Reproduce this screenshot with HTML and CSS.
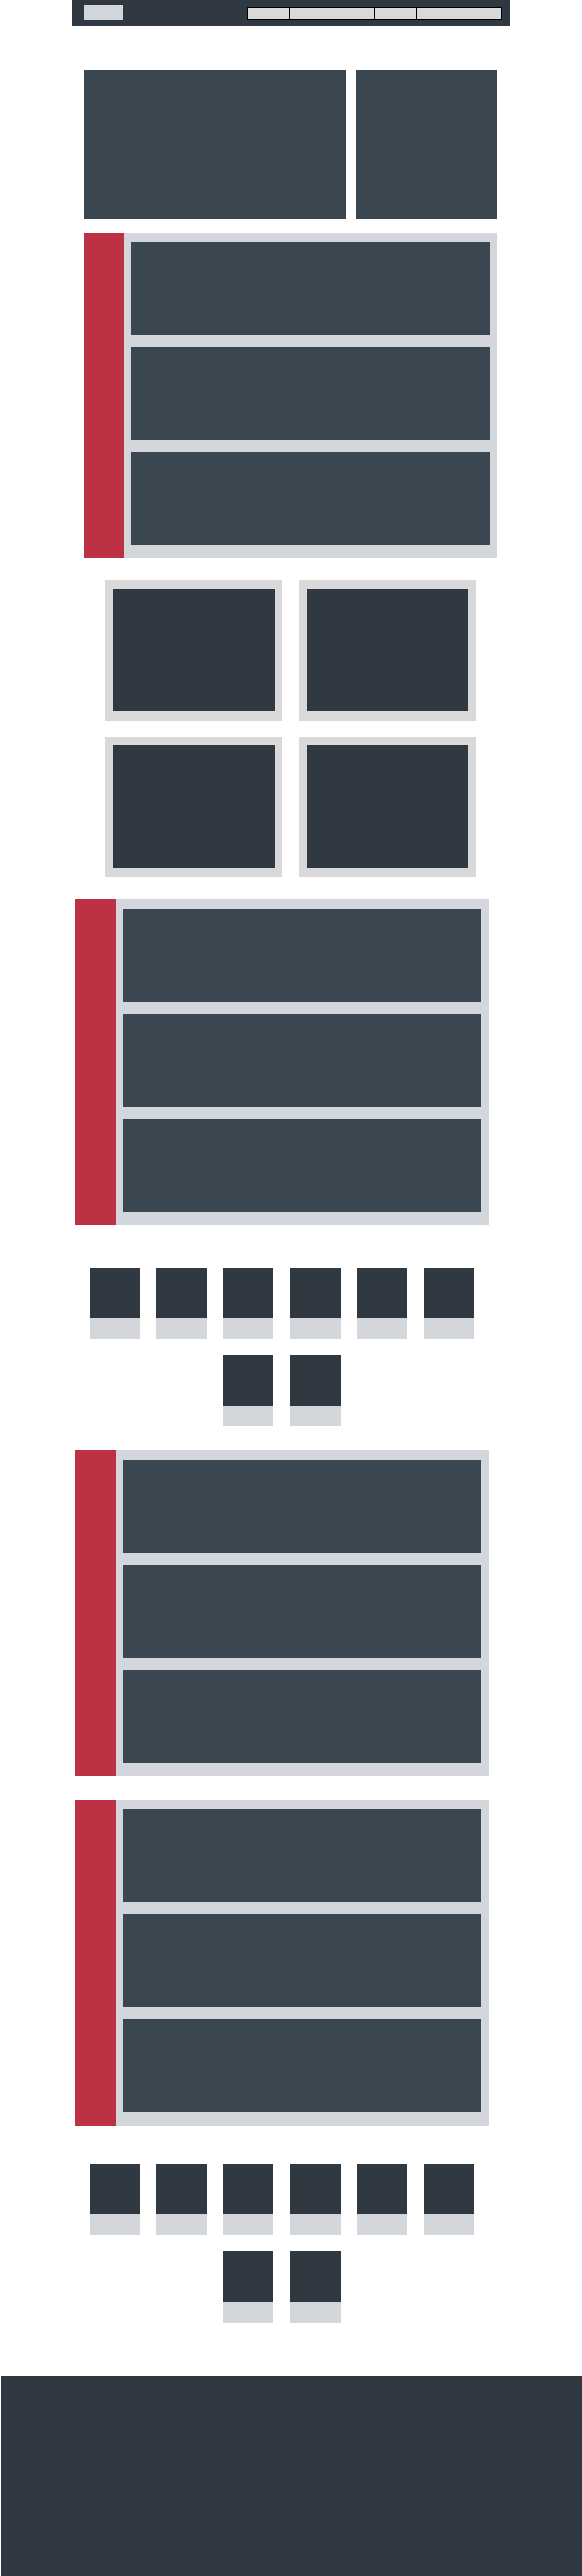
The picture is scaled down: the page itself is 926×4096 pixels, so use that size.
FILE: index.html
```html
<!DOCTYPE html>
<html lang="en">
<head>
  <meta charset="utf-8">
  <meta name="viewport" content="width=device-width, initial-scale=1">
  <title>Home</title>
  <link rel="stylesheet" href="styles.css">
</head>
<body>
  <header class="topbar">
    <a class="logo" href="#" aria-label="Home"></a>
    <nav class="menu" aria-label="Main">
      <a class="menu-item" href="#news" aria-label="News"></a>
      <a class="menu-item" href="#cards" aria-label="Cards"></a>
      <a class="menu-item" href="#stories" aria-label="Stories"></a>
      <a class="menu-item" href="#people" aria-label="People"></a>
      <a class="menu-item" href="#events" aria-label="Events"></a>
      <a class="menu-item" href="#partners" aria-label="Partners"></a>
    </nav>
  </header>

  <main class="content">
    <section class="hero">
      <div class="hero-block"></div>
      <div class="hero-block"></div>
    </section>

    <section class="panel panel-lead" id="news">
      <div class="panel-label"></div>
      <div class="panel-list">
        <article class="panel-item"></article>
        <article class="panel-item"></article>
        <article class="panel-item"></article>
      </div>
    </section>

    <section class="cards" id="cards">
      <article class="card"><div class="card-media"></div></article>
      <article class="card"><div class="card-media"></div></article>
      <article class="card"><div class="card-media"></div></article>
      <article class="card"><div class="card-media"></div></article>
    </section>

    <section class="panel" id="stories">
      <div class="panel-label"></div>
      <div class="panel-list">
        <article class="panel-item"></article>
        <article class="panel-item"></article>
        <article class="panel-item"></article>
      </div>
    </section>

    <section class="tiles tiles-people" id="people">
      <div class="tile"></div>
      <div class="tile"></div>
      <div class="tile"></div>
      <div class="tile"></div>
      <div class="tile"></div>
      <div class="tile"></div>
      <div class="tile tile-centered"></div>
      <div class="tile"></div>
    </section>

    <section class="panel" id="events">
      <div class="panel-label"></div>
      <div class="panel-list">
        <article class="panel-item"></article>
        <article class="panel-item"></article>
        <article class="panel-item"></article>
      </div>
    </section>

    <section class="panel panel-next">
      <div class="panel-label"></div>
      <div class="panel-list">
        <article class="panel-item"></article>
        <article class="panel-item"></article>
        <article class="panel-item"></article>
      </div>
    </section>

    <section class="tiles tiles-partners" id="partners">
      <div class="tile"></div>
      <div class="tile"></div>
      <div class="tile"></div>
      <div class="tile"></div>
      <div class="tile"></div>
      <div class="tile"></div>
      <div class="tile tile-centered"></div>
      <div class="tile"></div>
    </section>
  </main>

  <footer class="footer"></footer>
</body>
</html>
```

FILE: styles.css
```css
:root {
  --ink: #303841;
  --slate: #3a4750;
  --mist: #d3d6db;
  --grey: #d9d9d9;
  --red: #be3144;
}

* {
  box-sizing: border-box;
}

body {
  margin: 0;
  background: #fff;
  font-family: "Liberation Sans", sans-serif;
}

/* Top bar */
.topbar {
  display: flex;
  justify-content: space-between;
  align-items: flex-end;
  margin: 0 114px;
  padding: 8px 14px 9px 19px;
  background: var(--ink);
}

.logo {
  width: 62px;
  height: 24px;
  background: var(--mist);
}

.menu {
  display: flex;
  gap: 1px;
  flex: 0 1 405px;
  padding: 1px;
  background: #000;
}

.menu-item {
  flex: 1;
  height: 19px;
  background: var(--grey);
}

/* Hero */
.hero {
  display: grid;
  grid-template-columns: 418fr 225fr;
  gap: 15px;
  margin: 71px 135px 22px 133px;
}

.hero-block {
  height: 236px;
  background: var(--slate);
}

/* Panels with a coloured label column */
.panel {
  display: flex;
  margin: 0 148px 0 120px;
  background: var(--mist);
}

.panel-lead {
  margin: 0 135px 0 133px;
}

.panel-next {
  margin-top: 38px;
}

.panel-label {
  flex: 0 0 64px;
  background: var(--red);
}

.panel-list {
  display: flex;
  flex: 1;
  flex-direction: column;
  gap: 19px;
  padding: 15px 12px 21px;
}

.panel-item {
  height: 148px;
  background: var(--slate);
}

/* Cards */
.cards {
  display: grid;
  grid-template-columns: 1fr 1fr;
  gap: 26px;
  margin: 35px 169px 35px 167px;
}

.card {
  padding: 13px 12px 15px 13px;
  background: var(--grey);
}

.card-media {
  height: 195px;
  background: var(--ink);
}

/* Tiles */
.tiles {
  display: grid;
  grid-template-columns: repeat(6, 1fr);
  gap: 26px;
  margin: 0 172px 0 143px;
}

.tiles-people {
  margin-top: 68px;
  margin-bottom: 38px;
}

.tiles-partners {
  margin-top: 61px;
  margin-bottom: 85px;
}

.tile {
  height: 113px;
  border-bottom: 33px solid var(--mist);
  background: var(--ink);
}

.tile-centered {
  grid-column-start: 3;
}

/* Footer */
.footer {
  height: 318px;
  margin-left: 1px;
  background: var(--ink);
}
```
